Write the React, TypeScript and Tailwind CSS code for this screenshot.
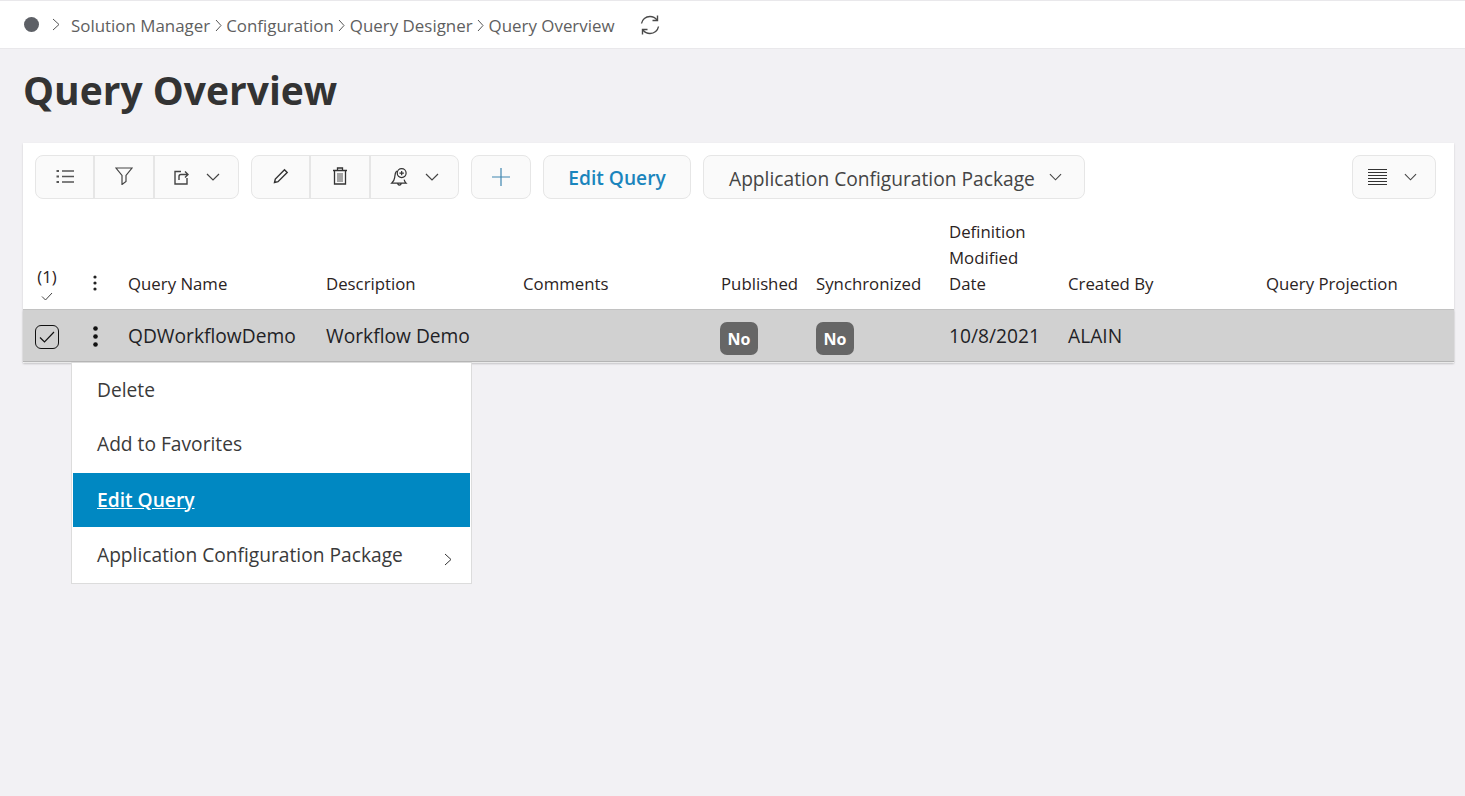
import React from "react";

function Chev({ className = "w-[14px] h-[8px]", color = "#444" }: { className?: string; color?: string }) {
  return (
    <svg viewBox="0 0 14 8" className={className} fill="none" stroke={color} strokeWidth="1.2">
      <path d="M1 1l6 6 6-6" />
    </svg>
  );
}

function Sep() {
  return (
    <svg viewBox="0 0 7 13" className="w-[7px] h-[13px] mx-[4.5px] shrink-0" fill="none" stroke="#555" strokeWidth="1">
      <path d="M1 1l5 5.500-5 5.500" />
    </svg>
  );
}

function Cell({ w, children, last }: { w: string; children: React.ReactNode; last?: boolean }) {
  return (
    <div className={`${w} h-full flex items-center justify-center ${last ? "" : "border-r-2 border-[#e6e6e6]"}`}>
      {children}
    </div>
  );
}

function Badge({ className = "" }: { className?: string }) {
  return (
    <span className={`inline-flex items-center justify-center w-[38px] h-[33px] rounded-[7px] bg-[#666666] text-white text-[16px] font-bold ${className}`}>
      No
    </span>
  );
}

function Head({ w, children, className = "" }: { w: string; children: React.ReactNode; className?: string }) {
  return <div className={`${w} shrink-0 leading-[26px] ${className}`}>{children}</div>;
}

export default function App() {
  return (
    <div
      className="relative w-[1465px] h-[796px] overflow-hidden bg-[#f2f1f4] text-[#212121]"
      style={{ fontFamily: '"Open Sans", sans-serif' }}
    >
      <div className="h-[49px] bg-white border-b border-t border-[#e9e8eb] flex items-center pl-[24px] text-[#5f5f5f] text-[16.9px]">
        <span className="w-[15px] h-[15px] rounded-full bg-[#5d6066] mr-[13px]" />
        <svg viewBox="0 0 8 13" className="w-[8px] h-[13px] mr-[11px]" fill="none" stroke="#555" strokeWidth="1">
          <path d="M1 1l6 5.500-6 5.500" />
        </svg>
        <div className="flex items-center pt-[2px]">
          <span>Solution Manager</span>
          <Sep />
          <span>Configuration</span>
          <Sep />
          <span>Query Designer</span>
          <Sep />
          <span>Query Overview</span>
        </div>
        <svg viewBox="0 0 22 22" className="w-[22px] h-[22px] ml-[24px]" fill="none" stroke="#4a4a4a" strokeWidth="1.4">
          <path d="M2.500 9.500C3.200 5.500 6.600 2.500 11 2.500c3 0 5.300 1.200 7 3.500" />
          <path d="M18.500 1.500V6.500H13.500" />
          <path d="M19.500 12.500c-.7 4-4.100 7-8.500 7-3 0-5.300-1.200-7-3.500" />
          <path d="M3.500 20.500V15.500H8.500" />
        </svg>
      </div>

      <h1 className="pl-[23px] pt-[15px] h-[94px] text-[39px] leading-[52px] font-bold text-[#333333]">Query Overview</h1>

      <div className="relative mx-[23px] w-[1431px] h-[220px] bg-white shadow-[0_1px_2px_rgba(0,0,0,0.15)]">
        <div className="flex items-start gap-[12px] pt-[12px] pl-[12px] pr-[18px] h-[73px]">
          <div className="flex h-[44px] w-[204px] rounded-[8px] border border-[#e6e6e6] bg-[#fafafa]">
            <Cell w="w-[59px]">
              <svg viewBox="0 0 18 15" className="w-[18px] h-[15px] -mt-[2px]" fill="none" stroke="#555" strokeWidth="1.4">
                <path d="M6 2h12M6 7.500h12M6 13h12" />
                <path d="M0.500 2h2.500M0.500 7.500h2.500M0.500 13h2.500" strokeWidth="2.200" />
              </svg>
            </Cell>
            <Cell w="w-[60px]">
              <svg viewBox="0 0 18 18" className="w-[18px] h-[18px] -mt-[2px]" fill="none" stroke="#444" strokeWidth="1.200">
                <path d="M1 1h16l-6 7.500v6l-4 3v-9z" />
              </svg>
            </Cell>
            <Cell w="flex-1 gap-[16px]" last>
              <svg viewBox="0 0 16 16" className="w-[16px] h-[16px]" fill="none" stroke="#444" strokeWidth="1.400">
                <path d="M7 2.500H1v12.500h12V9" />
                <path d="M5 11V7.500C5 6 6 5.500 7 5.500h7M11 2.500l3 3-3 3" />
              </svg>
              <Chev />
            </Cell>
          </div>

          <div className="flex h-[44px] w-[208px] rounded-[8px] border border-[#e6e6e6] bg-[#fafafa]">
            <Cell w="w-[59px]">
              <svg viewBox="0 0 16 16" className="w-[16px] h-[16px] -mt-[2px]" fill="none" stroke="#333" strokeWidth="1.400">
                <path d="M1.500 14.500l.8-3.500L11.500 1.800l2.700 2.700L5 13.700z" />
              </svg>
            </Cell>
            <Cell w="w-[60px]">
              <svg viewBox="0 0 16 18" className="w-[16px] h-[18px] -mt-[2px]" fill="none" stroke="#333" strokeWidth="1.300">
                <path d="M1 3.500h14M5.500 3.500V1h5v2.500M2.500 3.500V17h11V3.500" />
                <path d="M6 6v9M8 6v9M10 6v9" stroke="#777" />
              </svg>
            </Cell>
            <Cell w="flex-1 gap-[15px]" last>
              <svg viewBox="0 0 18 18" className="w-[20px] h-[20px] -mt-[1px]" fill="none" stroke="#333" strokeWidth="1.100">
                <path d="M6 3.500C4.500 5 4.500 7 4.200 9.500 4 11.500 3 13 1.500 14.500h13c-1-1-1.500-2-1.800-3.200" />
                <path d="M7 14.500c0 2.500 3 2.500 3 0" />
                <circle cx="10.500" cy="5.500" r="4" />
                <path d="M10.500 3.500v4M8.500 5.500h4" />
              </svg>
              <Chev />
            </Cell>
          </div>

          <div className="flex items-center justify-center h-[44px] w-[60px] rounded-[8px] border border-[#e6e6e6] bg-[#fafafa]">
            <svg viewBox="0 0 18 18" className="w-[18px] h-[18px]" fill="none" stroke="#3f86b0" strokeWidth="1.200">
              <path d="M9 0v18M0 9h18" />
            </svg>
          </div>

          <div className="flex items-center justify-center pt-[3px] h-[44px] w-[148px] rounded-[8px] border border-[#e6e6e6] bg-[#fafafa] text-[#1a85bd] text-[19.2px] font-semibold">
            Edit Query
          </div>

          <div className="flex items-center gap-[14px] pl-[25px] pt-[4px] h-[44px] w-[382px] rounded-[8px] border border-[#e6e6e6] bg-[#fafafa] text-[#444] text-[19.2px]">
            Application Configuration Package
            <Chev className="w-[13px] h-[8px] -mt-[4px]" />
          </div>

          <div className="ml-auto flex items-center gap-[17px] pl-[15px] h-[44px] w-[84px] rounded-[8px] border border-[#e6e6e6] bg-[#fafafa]">
            <svg viewBox="0 0 19 18" className="w-[19px] h-[18px] shrink-0" fill="none" stroke="#333" strokeWidth="1">
              <path d="M0 1.500h19M0 4.500h19M0 7.500h19M0 10.500h19M0 13.500h19M0 16.500h19" />
            </svg>
            <Chev className="w-[13px] h-[8px] shrink-0" />
          </div>
        </div>

        <div className="flex items-end h-[94px] pb-[12px] pl-[12px] text-[16.8px] text-[#2b2323] border-b border-[#c4c4c4]">
          <Head w="w-[48px]" className="flex flex-col items-start -mb-[4px]">
            <span className="w-[24px] text-center leading-[24px] text-[16.8px]">(1)</span>
            <svg viewBox="0 0 12 9" className="w-[12px] h-[9px] ml-[6px] mt-[3px]" fill="none" stroke="#444" strokeWidth="1">
              <path d="M1 4.500l3.500 3.500L11 1" />
            </svg>
          </Head>
          <Head w="w-[45px]" className="pb-[6px] pl-[10px]">
            <svg viewBox="0 0 4 16" className="w-[4px] h-[16px]" fill="#222">
              <circle cx="2" cy="2" r="1.600" />
              <circle cx="2" cy="8" r="1.600" />
              <circle cx="2" cy="14" r="1.600" />
            </svg>
          </Head>
          <Head w="w-[198px]">Query Name</Head>
          <Head w="w-[197px]">Description</Head>
          <Head w="w-[198px]">Comments</Head>
          <Head w="w-[95px]">Published</Head>
          <Head w="w-[133px]">Synchronized</Head>
          <Head w="w-[119px]">
            Definition
            <br />
            Modified
            <br />
            Date
          </Head>
          <Head w="w-[198px]">Created By</Head>
          <Head w="w-[180px]">Query Projection</Head>
        </div>

        <div className="flex items-center h-[52px] pl-[12px] pt-[2px] bg-[#d1d1d1] border-b border-[#b5b5b5] text-[19.2px] text-[#1f1f26] shadow-[0_1px_2px_rgba(0,0,0,0.12)]">
          <div className="w-[48px] shrink-0">
            <span className="flex items-center justify-center w-[24px] h-[24px] rounded-[6px] border border-[#111]">
              <svg viewBox="0 0 16 12" className="w-[16px] h-[12px]" fill="none" stroke="#111" strokeWidth="1.200">
                <path d="M1 6.500l4.500 4.500L15 1" />
              </svg>
            </span>
          </div>
          <div className="w-[45px] shrink-0 pl-[10px]">
            <svg viewBox="0 0 5 21" className="w-[5px] h-[21px]" fill="#111">
              <circle cx="2.500" cy="2.500" r="2.300" />
              <circle cx="2.500" cy="10.500" r="2.300" />
              <circle cx="2.500" cy="18.500" r="2.300" />
            </svg>
          </div>
          <div className="w-[198px] shrink-0">QDWorkflowDemo</div>
          <div className="w-[197px] shrink-0">Workflow Demo</div>
          <div className="w-[198px] shrink-0" />
          <div className="w-[95px] shrink-0 pt-[4px]">
            <Badge className="-ml-[1px]" />
          </div>
          <div className="w-[133px] shrink-0 pt-[4px]">
            <Badge />
          </div>
          <div className="w-[119px] shrink-0">10/8/2021</div>
          <div className="w-[198px] shrink-0">ALAIN</div>
        </div>

        <div className="absolute left-[48px] top-[219px] w-[401px] h-[222px] bg-white border border-[#dcdcdc] text-[19.2px] text-[#3a3a3a] z-10">
          <div className="h-[54px] flex items-center pl-[25px]">Delete</div>
          <div className="h-[56px] flex items-center pl-[25px] pb-[1px]">Add to Favorites</div>
          <div className="h-[54px] mx-[1px] flex items-center pl-[24px] bg-[#0088c2] text-white font-semibold underline">
            Edit Query
          </div>
          <div className="relative h-[55px] mt-[1px] flex items-center pl-[25px]">
            Application Configuration Package
            <svg viewBox="0 0 8 13" className="absolute left-[372px] top-[25px] w-[8px] h-[13px]" fill="none" stroke="#333" strokeWidth="1">
              <path d="M1 1l6 5.500L1 12" />
            </svg>
          </div>
        </div>
      </div>
    </div>
  );
}
